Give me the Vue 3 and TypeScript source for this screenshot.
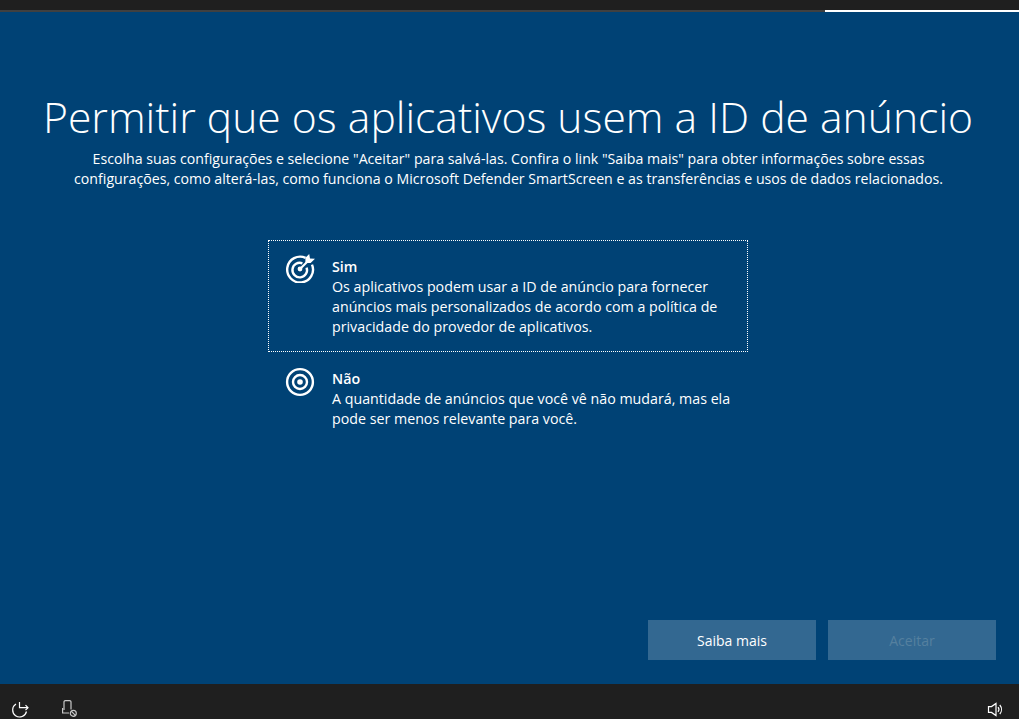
<script setup lang="ts">
interface Option {
  title: string
  lines: string[]
  arrow: boolean
  focused: boolean
}
const options: Option[] = [
  {
    title: 'Sim',
    lines: [
      'Os aplicativos podem usar a ID de anúncio para fornecer',
      'anúncios mais personalizados de acordo com a política de',
      'privacidade do provedor de aplicativos.',
    ],
    arrow: true,
    focused: true,
  },
  {
    title: 'Não',
    lines: [
      'A quantidade de anúncios que você vê não mudará, mas ela',
      'pode ser menos relevante para você.',
    ],
    arrow: false,
    focused: false,
  },
]
</script>

<template>
  <div class="screen">
    <div class="topbar"></div>
    <div class="progress">
      <div class="done"></div>
      <div class="rest"></div>
    </div>
    <main class="main">
      <h1 class="title">Permitir que os aplicativos usem a ID de anúncio</h1>
      <p class="sub">
        Escolha suas configurações e selecione "Aceitar" para salvá-las. Confira o link "Saiba mais" para obter informações sobre essas<br />
        configurações, como alterá-las, como funciona o Microsoft Defender SmartScreen e as transferências e usos de dados relacionados.
      </p>
      <div class="options">
        <div v-for="o in options" :key="o.title" class="option" :class="{ focused: o.focused }">
          <svg class="icon" viewBox="0 0 30 30" fill="none" stroke="#fff" stroke-width="2.4">
            <template v-if="o.arrow">
              <path d="M20.6 4.9A12.9 12.9 0 1 0 27 11.6" />
              <path d="M17.4 10.3A7.3 7.3 0 1 0 21.6 14.6" />
              <circle cx="15" cy="16" r="2.4" fill="#fff" stroke="none" />
              <path d="M15 16 24.5 6.5" stroke-width="2.2" />
              <path d="M20.4 10V4.8L24.2 1 25 5.4 30 5.8 25.6 10Z" fill="#fff" stroke="none" />
            </template>
            <template v-else>
              <circle cx="15" cy="15" r="12.9" />
              <circle cx="15" cy="15" r="7" />
              <circle cx="15" cy="15" r="2.8" fill="#fff" stroke="none" />
            </template>
          </svg>
          <div class="text">
            <div class="name">{{ o.title }}</div>
            <div v-for="l in o.lines" :key="l">{{ l }}</div>
          </div>
        </div>
      </div>
      <div class="actions">
        <button class="btn">Saiba mais</button>
        <button class="btn disabled">Aceitar</button>
      </div>
    </main>
    <footer class="footer">
      <div class="left">
        <svg class="ficon" viewBox="0 0 20 20" fill="none" stroke="#fff" stroke-width="1.2">
          <path d="M6 5A7 7 0 1 0 16.5 12.5" />
          <path d="M9.5 3V8.7H18" />
          <path d="M15.5 6.2 18 8.7 15.5 11.2" />
        </svg>
        <svg class="ficon" viewBox="0 0 20 20" fill="none" stroke="#c8c8c8" stroke-width="1.2">
          <path d="M4 11V3A1.4 1.4 0 0 1 5.4 1.6H9.6A1.4 1.4 0 0 1 11 3V10.5" />
          <path d="M2.6 9V14H9" />
          <circle cx="13.3" cy="14.3" r="3" />
          <path d="M11.2 12.2 15.4 16.4" />
        </svg>
      </div>
      <svg class="ficon" viewBox="0 0 20 20" fill="none" stroke="#fff" stroke-width="1.2">
        <path d="M4.5 7.6H7.5L12 4.5V16.5L7.5 13.4H4.5Z" />
        <path d="M14 8.2A3.6 3.6 0 0 1 14 12.8" />
        <path d="M15.8 6A7 7 0 0 1 15.8 15" />
      </svg>
    </footer>
  </div>
</template>

<style>
html, body { margin: 0; background: #004275; }
</style>

<style scoped>
.screen {
  width: 1019px;
  height: 719px;
  display: flex;
  flex-direction: column;
  background: #004275;
  color: #fff;
  font-family: "Open Sans", "Noto Sans", sans-serif;
  overflow: hidden;
}
.topbar { height: 10px; background: #1f1f1f; flex: none; }
.progress { height: 2px; display: flex; flex: none; }
.done { width: 825px; background: #404040; }
.rest { flex: 1; background: #fff; }
.main { flex: 1; display: flex; flex-direction: column; align-items: center; min-height: 0; }
.title {
  margin: 74px 3px 0 0;
  font-size: 42.65px;
  line-height: 60px;
  font-weight: 300;
  white-space: nowrap;
}
.sub {
  margin: 3px 2px 0 0;
  font-size: 14.17px;
  line-height: 20px;
  text-align: center;
  white-space: nowrap;
}
.options { margin: 51px 3px 0 0; width: 480px; display: flex; flex-direction: column; }
.option {
  box-sizing: border-box;
  display: flex;
  gap: 17px;
  padding: 16px 16px;
  border: 1px solid transparent;
  font-size: 14.24px;
  line-height: 20px;
  white-space: nowrap;
}
.option.focused { border: 1px dotted #fff; height: 112px; }
.icon { width: 30px; height: 30px; flex: none; margin-top: -2px; }
.option.focused .icon { margin-top: -4px; }
.name { font-weight: 600; }
.actions {
  margin-top: auto;
  margin-bottom: 24px;
  align-self: flex-end;
  margin-right: 23px;
  display: flex;
  gap: 12px;
}
.btn {
  width: 168px;
  height: 40px;
  border: none;
  background: #336891;
  color: #fff;
  font: inherit;
  font-size: 14px;
}
.btn.disabled { color: #55809f; }
.footer {
  height: 35px;
  flex: none;
  background: #1f1f1f;
  display: flex;
  align-items: flex-end;
  justify-content: space-between;
  padding: 0 15px 0 10px;
}
.left { display: flex; gap: 30px; }
.ficon { width: 20px; height: 20px; display: block; }
</style>
